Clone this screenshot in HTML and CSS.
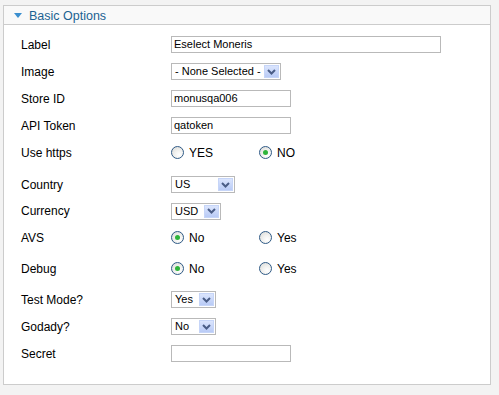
FILE: index.html
```html
<!DOCTYPE html>
<html>
<head>
<meta charset="utf-8">
<link rel="stylesheet" href="styles.css">
</head>
<body>
<div class="panel">
  <div class="panel-head">
    <span class="toggler"></span>
    <span class="panel-title">Basic Options</span>
  </div>
  <div class="panel-body">
    <div class="row">
      <span class="key">Label</span>
      <span class="input w-270">Eselect Moneris</span>
    </div>
    <div class="row">
      <span class="key">Image</span>
      <span class="select w-110"><span class="select-text">- None Selected -</span><span class="select-btn"><svg width="9" height="6" viewBox="0 0 9 6"><path d="M1 1 L4.5 4.5 L8 1" fill="none" stroke="#4a5d86" stroke-width="2"/></svg></span></span>
    </div>
    <div class="row">
      <span class="key">Store ID</span>
      <span class="input w-120">monusqa006</span>
    </div>
    <div class="row">
      <span class="key">API Token</span>
      <span class="input w-120">qatoken</span>
    </div>
    <div class="row">
      <span class="key">Use https</span>
      <span class="radios">
        <span class="option"><span class="radio"></span>YES</span>
        <span class="option"><span class="radio checked"></span>NO</span>
      </span>
    </div>
    <div class="row row--wide">
      <span class="key">Country</span>
      <span class="select w-64"><span class="select-text">US</span><span class="select-btn"><svg width="9" height="6" viewBox="0 0 9 6"><path d="M1 1 L4.5 4.5 L8 1" fill="none" stroke="#4a5d86" stroke-width="2"/></svg></span></span>
    </div>
    <div class="row row--short">
      <span class="key">Currency</span>
      <span class="select w-50"><span class="select-text">USD</span><span class="select-btn"><svg width="9" height="6" viewBox="0 0 9 6"><path d="M1 1 L4.5 4.5 L8 1" fill="none" stroke="#4a5d86" stroke-width="2"/></svg></span></span>
    </div>
    <div class="row">
      <span class="key">AVS</span>
      <span class="radios">
        <span class="option"><span class="radio checked"></span>No</span>
        <span class="option"><span class="radio"></span>Yes</span>
      </span>
    </div>
    <div class="row row--spaced">
      <span class="key">Debug</span>
      <span class="radios">
        <span class="option"><span class="radio checked"></span>No</span>
        <span class="option"><span class="radio"></span>Yes</span>
      </span>
    </div>
    <div class="row row--spaced">
      <span class="key">Test Mode?</span>
      <span class="select w-45"><span class="select-text">Yes</span><span class="select-btn"><svg width="9" height="6" viewBox="0 0 9 6"><path d="M1 1 L4.5 4.5 L8 1" fill="none" stroke="#4a5d86" stroke-width="2"/></svg></span></span>
    </div>
    <div class="row">
      <span class="key">Godady?</span>
      <span class="select w-45"><span class="select-text">No</span><span class="select-btn"><svg width="9" height="6" viewBox="0 0 9 6"><path d="M1 1 L4.5 4.5 L8 1" fill="none" stroke="#4a5d86" stroke-width="2"/></svg></span></span>
    </div>
    <div class="row">
      <span class="key">Secret</span>
      <span class="input w-120"></span>
    </div>
  </div>
</div>
</body>
</html>
```
FILE: styles.css
```css
html, body {
  margin: 0;
  padding: 0;
}
body {
  background: #f3f3f3;
  font-family: "Liberation Sans", Arial, sans-serif;
  font-size: 12px;
  color: #000;
  padding: 5px 0 0 3px;
  height: 395px;
  box-sizing: border-box;
}
.panel {
  width: 488px;
  box-sizing: border-box;
  border: 1px solid #cccccc;
  background: #ffffff;
}
.panel-head {
  height: 18px;
  background: #f9f9f9;
  border-bottom: 1px solid #cccccc;
  display: flex;
  align-items: center;
  padding-left: 10px;
}
.toggler {
  width: 0;
  height: 0;
  border-left: 4px solid transparent;
  border-right: 4px solid transparent;
  border-top: 5px solid #3b8fcf;
  margin-right: 7px;
  margin-top: 1px;
}
.panel-title {
  color: #1b6292;
  font-size: 12.5px;
  padding-top: 2px;
}
.panel-body {
  padding: 6px 0 17px 17px;
}
.row {
  height: 27px;
  display: flex;
  align-items: center;
}
.row--wide {
  margin-top: 5px;
}
.row--short {
  height: 26px;
}
.row--spaced {
  margin-top: 4px;
}
.key {
  width: 150px;
  flex: none;
}
.input {
  height: 17px;
  box-sizing: border-box;
  border: 1px solid #b9b9b9;
  background: #fff;
  font-size: 11px;
  line-height: 15px;
  padding-left: 2px;
  white-space: nowrap;
  overflow: hidden;
}
.w-270 { width: 270px; }
.w-120 { width: 120px; }
.w-110 { width: 110px; }
.w-64 { width: 64px; }
.w-50 { width: 50px; }
.w-45 { width: 45px; }
.select {
  height: 17px;
  box-sizing: border-box;
  border: 1px solid #b9b9b9;
  background: #fff;
  display: flex;
  align-items: center;
  justify-content: space-between;
  padding: 0 1px 0 3px;
  font-size: 11px;
}
.select-text {
  white-space: nowrap;
  line-height: 15px;
}
.select-btn {
  width: 15px;
  height: 13px;
  box-sizing: border-box;
  background: linear-gradient(#dbe5fd, #b9cbf6);
  border: 1px solid #c6d5f8;
  display: flex;
  align-items: center;
  justify-content: center;
}
.select-btn svg {
  display: block;
}
.radios {
  display: flex;
  align-items: center;
}
.option {
  width: 88px;
  display: flex;
  align-items: center;
}
.radio {
  width: 13px;
  height: 13px;
  box-sizing: border-box;
  border-radius: 50%;
  border: 1px solid #2f5a86;
  background: radial-gradient(circle at 65% 70%, #ffffff 0%, #f2f2f0 40%, #d8d8d4 100%);
  margin-right: 5px;
  position: relative;
  flex: none;
}
.radio.checked::after {
  content: "";
  position: absolute;
  left: 3px;
  top: 3px;
  width: 5px;
  height: 5px;
  border-radius: 50%;
  background: #2eb43a;
}
```
